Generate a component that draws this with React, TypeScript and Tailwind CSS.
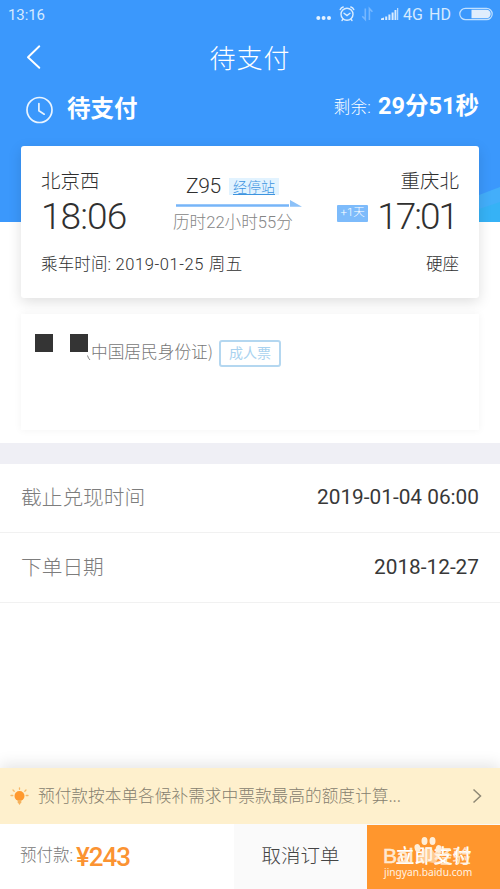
import type { ReactNode } from "react";

const CJK = "font-['Noto_Sans_CJK_SC',sans-serif]";
const NUM = "font-[Roboto,'Noto_Sans_CJK_SC',sans-serif]";

function StatusBar() {
  return (
    <div className={`flex h-[30px] items-center pl-[8px] pr-[7px] text-[15px] leading-[30px] text-[#d5eaff] ${NUM}`}>
      <span className="tracking-[-0.1px]">13:16</span>
      <svg className="ml-auto" width="85" height="30" viewBox="315 0 85 30" fill="none">
        <g fill="#e4f2ff">
          <circle cx="318.3" cy="18" r="2" />
          <circle cx="323.6" cy="18" r="2" />
          <circle cx="329" cy="18" r="2" />
        </g>
        <g stroke="#d9ecff" strokeWidth="1.4" strokeLinecap="round">
          <circle cx="347" cy="14.3" r="6" />
          <path d="M344 13.3l3 2.3 3-2.3M340.2 9.6a5 5 0 0 1 3-2.6M353.8 9.6a5 5 0 0 0-3-2.6M343 19.2l-1 1.3M351 19.2l1 1.3" />
        </g>
        <path d="M365.3 8.5v11l-3-3.2M369.4 20v-11.500l3 3.200" stroke="#75b7ff" strokeWidth="1.6" />
        <g fill="#d9ecff">
          <path d="M381 20v-1.500l3-1V20zM385.200 16.600h2V20h-2zM388.400 14.600h2V20h-2zM391.600 12.400h2V20h-2zM394.500 10h1.900v10h-1.900zM397.200 8h1V20h-1z" />
        </g>
      </svg>
      <span className="ml-[3px] w-[21px] whitespace-nowrap text-[16px]">4G</span>
      <span className="ml-[5px] w-[24px] whitespace-nowrap text-[16px]">HD</span>
      <svg className="ml-[6px]" width="34" height="30" viewBox="0 0 34 30" fill="none">
        <rect x="0.800" y="8.300" width="32.400" height="11.400" rx="5.700" stroke="#c0e0ff" strokeWidth="1.200" />
        <path d="M12.500 9.800H27.500a4.200 4.200 0 0 1 0 8.400H12.500z" fill="#dfedfd" />
      </svg>
    </div>
  );
}

function TitleBar() {
  return (
    <div className="relative flex h-[54px] items-center justify-center">
      <svg className="absolute left-[26px] top-[14px]" width="16" height="26" viewBox="0 0 16 26" fill="none">
        <path d="M13.300 2.300L2 13.300l11.300 10.500" stroke="#fff" strokeWidth="1.900" strokeLinecap="round" strokeLinejoin="round" />
      </svg>
      <h1 className={`text-[26px] font-light leading-[54px] tracking-[1px] text-white ${CJK}`}>待支付</h1>
    </div>
  );
}

function Countdown() {
  return (
    <div className={`flex h-[62px] pl-[26px] pr-[21px] text-white ${NUM}`}>
      <svg className="mt-[12px]" width="28" height="28" viewBox="0 0 28 28" fill="none">
        <circle cx="13.500" cy="14" r="12.500" stroke="#e9f4ff" strokeWidth="1.700" />
        <path d="M12.900 7.500v7.300l5.300 3.400" stroke="#e9f4ff" strokeWidth="1.700" strokeLinecap="round" strokeLinejoin="round" />
      </svg>
      <span className="ml-[13px] text-[23.500px] font-bold leading-[51px]">待支付</span>
      <span className="ml-auto text-[16.500px] font-light leading-[47px] tracking-[0.300px]">剩余:</span>
      <span className="ml-[7px] text-[23.500px] font-bold leading-[44px]">29分51秒</span>
    </div>
  );
}

function TripCard() {
  return (
    <section className={`flex h-[152px] flex-col rounded-[3px] bg-white px-[20px] text-[#303030] shadow-[0_4px_14px_rgba(0,0,0,0.13)] ${NUM}`}>
      <div className="flex h-[97px]">
        <div className="w-[132px] pt-[22px] font-light">
          <div className="text-[19.500px] leading-[28px]">北京西</div>
          <div className="text-[37px] leading-[42px] tracking-[-0.900px]">18:06</div>
        </div>
        <div className="w-[130px] pt-[26px]">
          <div className="flex h-[28px] pl-[13px]">
            <span className="w-[43px] text-[21px] font-light leading-[28px] tracking-[-0.300px]">Z95</span>
            <span className="mt-[6px] h-[17px] bg-[#e2f3ff] px-[4px] text-[14px] font-light leading-[18px] text-[#3d94df] underline underline-offset-2">经停站</span>
          </div>
          <svg className="ml-[3px]" width="127" height="9" viewBox="0 0 127 9">
            <path d="M0 4.200h113v2.500H0z" fill="#76b5f8" />
            <path d="M114 0l12 6.800h-12z" fill="#8cc1f8" />
          </svg>
          <div className="whitespace-nowrap text-[16.600px] font-light leading-[27px] text-[#858585]">历时22小时55分</div>
        </div>
        <div className="ml-auto flex flex-col items-end pt-[22px] font-light">
          <div className="text-[19.500px] leading-[28px]">重庆北</div>
          <div className="flex">
            <span className="mr-[9px] mt-[9px] h-[17px] w-[31px] rounded-[1px] bg-[#7dbbfb] text-center text-[11.500px] font-light leading-[14px] text-white">+1天</span>
            <span className="mr-[2px] text-[37px] leading-[42px] tracking-[-2px]">17:01</span>
          </div>
        </div>
      </div>
      <div className="flex justify-between text-[16.500px] font-light leading-[43px]">
        <span className="tracking-[0.150px]">
          乘车时间: <span className="tracking-[0.600px]">2019-01-25 周五</span>
        </span>
        <span>硬座</span>
      </div>
    </section>
  );
}

function PassengerCard() {
  return (
    <section className={`mt-[16px] flex h-[116px] bg-white pl-[14px] pt-[20px] shadow-[0_0_8px_rgba(0,0,0,0.05)] ${CJK}`}>
      <span className="h-[18px] w-[18px] bg-[#343434]" />
      <span className="ml-[17px] h-[18px] w-[18px] bg-[#343434]" />
      <span className="ml-[-2px] flex h-[35px] text-[16.700px] font-light leading-[34px] text-[#777]">
        <svg className="mt-[20px]" width="5" height="8" viewBox="0 0 5 8" fill="none">
          <path d="M1.500 1.500c.5 2 1.300 3.300 2.500 4.500" stroke="#8a8a8a" />
        </svg>
        中国居民身份证)
      </span>
      <span className="ml-[6px] mt-[6px] h-[27px] w-[62px] rounded-[3px] border-2 border-[#b4d7f0] text-center text-[14px] font-normal leading-[20px] text-[#a9d2ef]">成人票</span>
    </section>
  );
}

function InfoRow({ label, children }: { label: string; children: ReactNode }) {
  return (
    <div className={`flex h-[67px] justify-between border-b border-[#f1f1f1] pl-[21px] pr-[21px] leading-[63px] ${NUM}`}>
      <span className="text-[20.700px] font-light leading-[64px] text-[#7d7d7d]">{label}</span>
      <span className="text-[20.800px] text-[#383838]">{children}</span>
    </div>
  );
}

function Notice() {
  return (
    <div className={`flex h-[56px] items-center bg-[#fef0cd] pl-[10px] pr-[18px] shadow-[0_-4px_14px_rgba(0,0,0,0.1)] ${CJK}`}>
      <svg width="19" height="19" viewBox="0 0 19 19">
        <circle cx="9.500" cy="9" r="5" fill="#ff992e" />
        <path d="M7.700 13h3.600v2.300L9.500 18l-1.800-2.700z" fill="#f5b15c" />
        <path d="M1 8.500h1.800M16.200 8.500H18M3 3l1.200 1.200M16 3l-1.200 1.200M9.500 .8v1.500" stroke="#f7b867" strokeWidth="1.300" strokeLinecap="round" />
      </svg>
      <span className="ml-[9px] pb-[2px] text-[16.700px] font-light leading-[53px] text-[#86806f]">预付款按本单各候补需求中票款最高的额度计算...</span>
      <svg className="ml-auto" width="10" height="16" viewBox="0 0 10 16" fill="none">
        <path d="M1.500 1.500L8.500 8l-7 6.500" stroke="#8e8875" strokeWidth="1.500" />
      </svg>
    </div>
  );
}

function Watermark() {
  return (
    <div className="absolute left-[17px] top-[10px] h-[48px] w-[90px] text-[#fff3e2]">
      <svg className="absolute left-[29px] top-0" width="30" height="31" viewBox="0 0 30 31" fill="#ffefd9">
        <ellipse cx="4.500" cy="13" rx="2.900" ry="4" transform="rotate(-15 4.500 13)" />
        <ellipse cx="11.500" cy="6" rx="3" ry="4" />
        <ellipse cx="19.500" cy="6" rx="3" ry="4" />
        <ellipse cx="25.500" cy="14" rx="2.900" ry="4" transform="rotate(15 25.500 14)" />
        <path d="M15 12c3 0 4 3 7 6 4 4 3 9-1 10-3 0-4-1-6-1s-4 1-7 1c-4-2-5-6 0-10 3-3 4-6 7-6z" fillOpacity=".6" />
      </svg>
      <span className="absolute left-[-1px] top-[9px] font-['Liberation_Sans',sans-serif] text-[21px] leading-[24px] opacity-90 [-webkit-text-stroke:0.500px_#fff3e2]">Bai</span>
      <span className={`absolute left-[50px] top-[9px] whitespace-nowrap text-[18.500px] font-medium leading-[22px] opacity-80 ${CJK}`}>经验</span>
      <span className="absolute left-0 top-[29px] whitespace-nowrap font-['Noto_Sans',sans-serif] text-[10.200px] leading-[16px]">jingyan.baidu.com</span>
    </div>
  );
}

function ActionBar() {
  return (
    <div className={`flex h-[65px] ${NUM}`}>
      <div className="flex w-[234px] bg-white pl-[20px]">
        <span className="text-[16.500px] font-light leading-[64px] text-[#777]">预付款:</span>
        <span className="ml-[3px] text-[26px] font-medium leading-[66px] tracking-[-1px] text-[#fb9332]">¥243</span>
      </div>
      <button className="w-[133px] bg-[#fafafa] text-[19.500px] font-light leading-[64px] text-[#444]">取消订单</button>
      <button className="relative mt-px w-[133px] bg-[#ff962d] text-white">
        <span className="block text-[19px] font-medium leading-[62px]">立即支付</span>
        <Watermark />
      </button>
    </div>
  );
}

export default function App() {
  return (
    <main className="flex h-[889px] w-[500px] flex-col overflow-hidden bg-white">
      <header className="relative h-[222px] shrink-0 bg-[#3b98fc]">
        <svg className="absolute bottom-0 right-0" width="21" height="38" viewBox="0 0 21 38">
          <path d="M0 11L21 3v35H0z" fill="#43aefa" />
          <path d="M0 25l21-7v20H0z" fill="#36b2f6" />
        </svg>
        <StatusBar />
        <TitleBar />
        <Countdown />
        <div className="relative px-[21px]">
          <TripCard />
        </div>
      </header>
      <div className="h-[221px] shrink-0 px-[21px] pt-[76px]">
        <PassengerCard />
      </div>
      <div className="h-[21px] shrink-0 bg-[#efeff5]" />
      <div className="flex shrink-0 flex-col gap-[3px] pt-[2px]">
        <InfoRow label="截止兑现时间">2019-01-04 06:00</InfoRow>
        <InfoRow label="下单日期">2018-12-27</InfoRow>
      </div>
      <footer className="mt-auto">
        <Notice />
        <ActionBar />
      </footer>
    </main>
  );
}
